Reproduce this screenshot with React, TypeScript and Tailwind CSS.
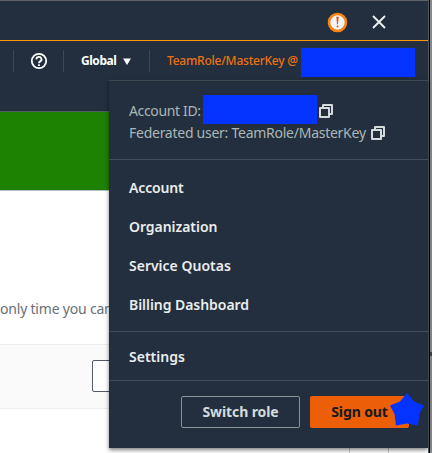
import React from "react";

function CopyIcon({ className = "" }: { className?: string }) {
  return (
    <svg className={`shrink-0 ${className}`} width="14" height="14" viewBox="0 0 14 14" fill="none" stroke="#d5dbdb" strokeWidth="2" strokeLinejoin="round">
      <path d="M1 4h9v9H1z" />
      <path d="M4 4V1h9v9h-3" />
    </svg>
  );
}

const items = [
  { label: "Account", cls: "tracking-[-0.15px]" },
  { label: "Organization", cls: "tracking-[-0.05px]" },
  { label: "Service Quotas", cls: "tracking-[0px]" },
  { label: "Billing Dashboard", cls: "tracking-[-0.05px]" },
];

function AccountMenu() {
  return (
    <div className="absolute left-[109px] top-[80px] flex h-[368px] w-[319px] flex-col border-t border-[#414750] bg-[#232f3e] shadow-[0_2px_4px_rgba(0,0,0,0.5)]">
      <div className="h-[79px] border-b border-[#414d5c] pl-5 pt-[14px] text-[14px] text-[#aab7b8]">
        <div className="flex h-[29px] items-center">
          <span className="w-[74px] whitespace-nowrap pt-px tracking-[-0.35px]">Account ID:</span>
          <span className="h-[29px] w-[114px] bg-[#0433ff]" />
          <CopyIcon className="ml-[2px] mt-[3px]" />
        </div>
        <div className="flex h-[18px] items-center">
          <span className="w-[242px] whitespace-nowrap pb-[2px] tracking-[-0.26px]">Federated user: TeamRole/MasterKey</span>
          <CopyIcon />
        </div>
      </div>
      <div className="flex h-[172px] flex-col border-b border-[#414d5c] pl-5 pt-[8px] text-[14px] font-semibold text-[#eaeded]">
        {items.map((i) => (
          <div key={i.label} className="flex h-[39px] items-center">
            <span className={i.cls}>{i.label}</span>
          </div>
        ))}
      </div>
      <div className="flex h-[49px] items-center border-b border-[#414d5c] pl-5 pt-px text-[14px] font-semibold text-[#eaeded]">
        <span className="tracking-[0px]">Settings</span>
      </div>
      <div className="flex gap-[10px] pl-[72px] pt-[15px] text-[14px] font-bold">
        <button className="h-8 w-[119px] whitespace-nowrap rounded-[2px] border border-[#879596] pb-[2px] text-[#d5dbdb]">
          <span className="tracking-[-0.1px]">Switch role</span>
        </button>
        <button className="h-8 w-[99px] whitespace-nowrap rounded-[2px] bg-[#ec5f07] pb-[2px] text-[#16191f]">
          <span className="tracking-[-0.1px]">Sign out</span>
        </button>
      </div>
      <svg className="absolute left-[281px] top-[312px]" width="35" height="34" viewBox="0 0 35 34" fill="#0433ff">
        <path d="M17 0 L24 8.5 L34 12.5 L29.5 20.5 L28 32.5 L17 30.5 L6 32.5 L4.5 21 L0 12.5 L10 8.5 Z" />
      </svg>
    </div>
  );
}

export default function App() {
  return (
    <div className="relative flex h-[453px] w-[432px] overflow-hidden bg-white font-['Noto_Sans','Open_Sans',sans-serif]">
      <div className="flex w-[428px] flex-col">
        <div className="h-[41px] border-b border-t border-b-[#ff9900] border-t-[#5f6367] bg-[#232f3e]">
          <div className="flex h-full items-center gap-[23px] pl-[327px] pt-[3px]">
            <svg width="21" height="21" viewBox="0 0 21 21">
              <circle cx="10.5" cy="10.5" r="8.5" fill="#f2f3f3" stroke="#f58414" strokeWidth="2.6" />
              <path d="M9.3 4.8h2.4l-.8 7.4h-.8z" fill="#dd4b11" />
              <circle cx="10.5" cy="14.5" r="0.9" fill="#dd4b11" />
            </svg>
            <svg width="16" height="16" viewBox="0 0 16 16" stroke="#f2f3f3" strokeWidth="1.8">
              <path d="M2 2l12 12M14 2L2 14" />
            </svg>
          </div>
        </div>
        <div className="flex h-[70px] bg-[#232f3e] pt-[9px] text-[12px] font-bold text-white">
          <div className="ml-[13px] flex h-[22px] w-[50px] items-center justify-center border-l border-[#414750] pl-[1px]">
            <svg width="18" height="18" viewBox="0 0 18 18" fill="none" stroke="#fff" strokeWidth="1.8">
              <circle cx="9" cy="9" r="7.2" />
              <path d="M6.5 7.4a2.5 2.4 0 1 1 3.7 2Q9 10 9 11.2" />
              <path d="M9 12.2v1.8" />
            </svg>
          </div>
          <div className="flex h-[22px] w-[86px] items-center border-l border-[#414750] pl-[17px]">
            <span className="w-[42px] tracking-[-0.45px]">Global</span>
            <svg width="8" height="7" viewBox="0 0 8 7" fill="#fff"><path d="M0 .5h8L4 7z" /></svg>
          </div>
          <div className="flex h-[22px] items-center border-l border-[#414750] pl-[17px] font-medium text-[#ec7211]">
            <span className="w-[134px] whitespace-nowrap tracking-[-0.23px]">TeamRole/MasterKey @</span>
            <span className="mt-[2px] h-[29px] w-[114px] shrink-0 bg-[#0433ff]" />
          </div>
        </div>
        <div className="h-[80px] border-b border-t border-b-[#b5bbbf] border-t-[#545b64] bg-[#1d8102]" />
        <div className="h-[153px] pt-[107px] text-[14px] leading-[21px] text-[#687078]">
          <span className="whitespace-nowrap tracking-[-0.2px]">only time you can</span>
        </div>
        <div className="h-[65px] border-b border-t border-[#eaeded] bg-[#fafafa] pl-[92px] pt-[15px]">
          <div className="h-8 w-[100px] rounded-[2px] border border-[#545b64] bg-white" />
        </div>
        <div className="flex h-[44px] pl-[349px]">
          <div className="w-[40px] border-l border-r border-[#c4c7c9]" />
        </div>
      </div>
      <AccountMenu />
      <div className="w-px bg-[#505a65]" />
      <div className="w-px bg-black" />
      <div className="flex w-[2px] flex-col bg-[#898989]">
        <div className="mt-[352px] h-[4px] bg-[#414141]" />
      </div>
    </div>
  );
}
